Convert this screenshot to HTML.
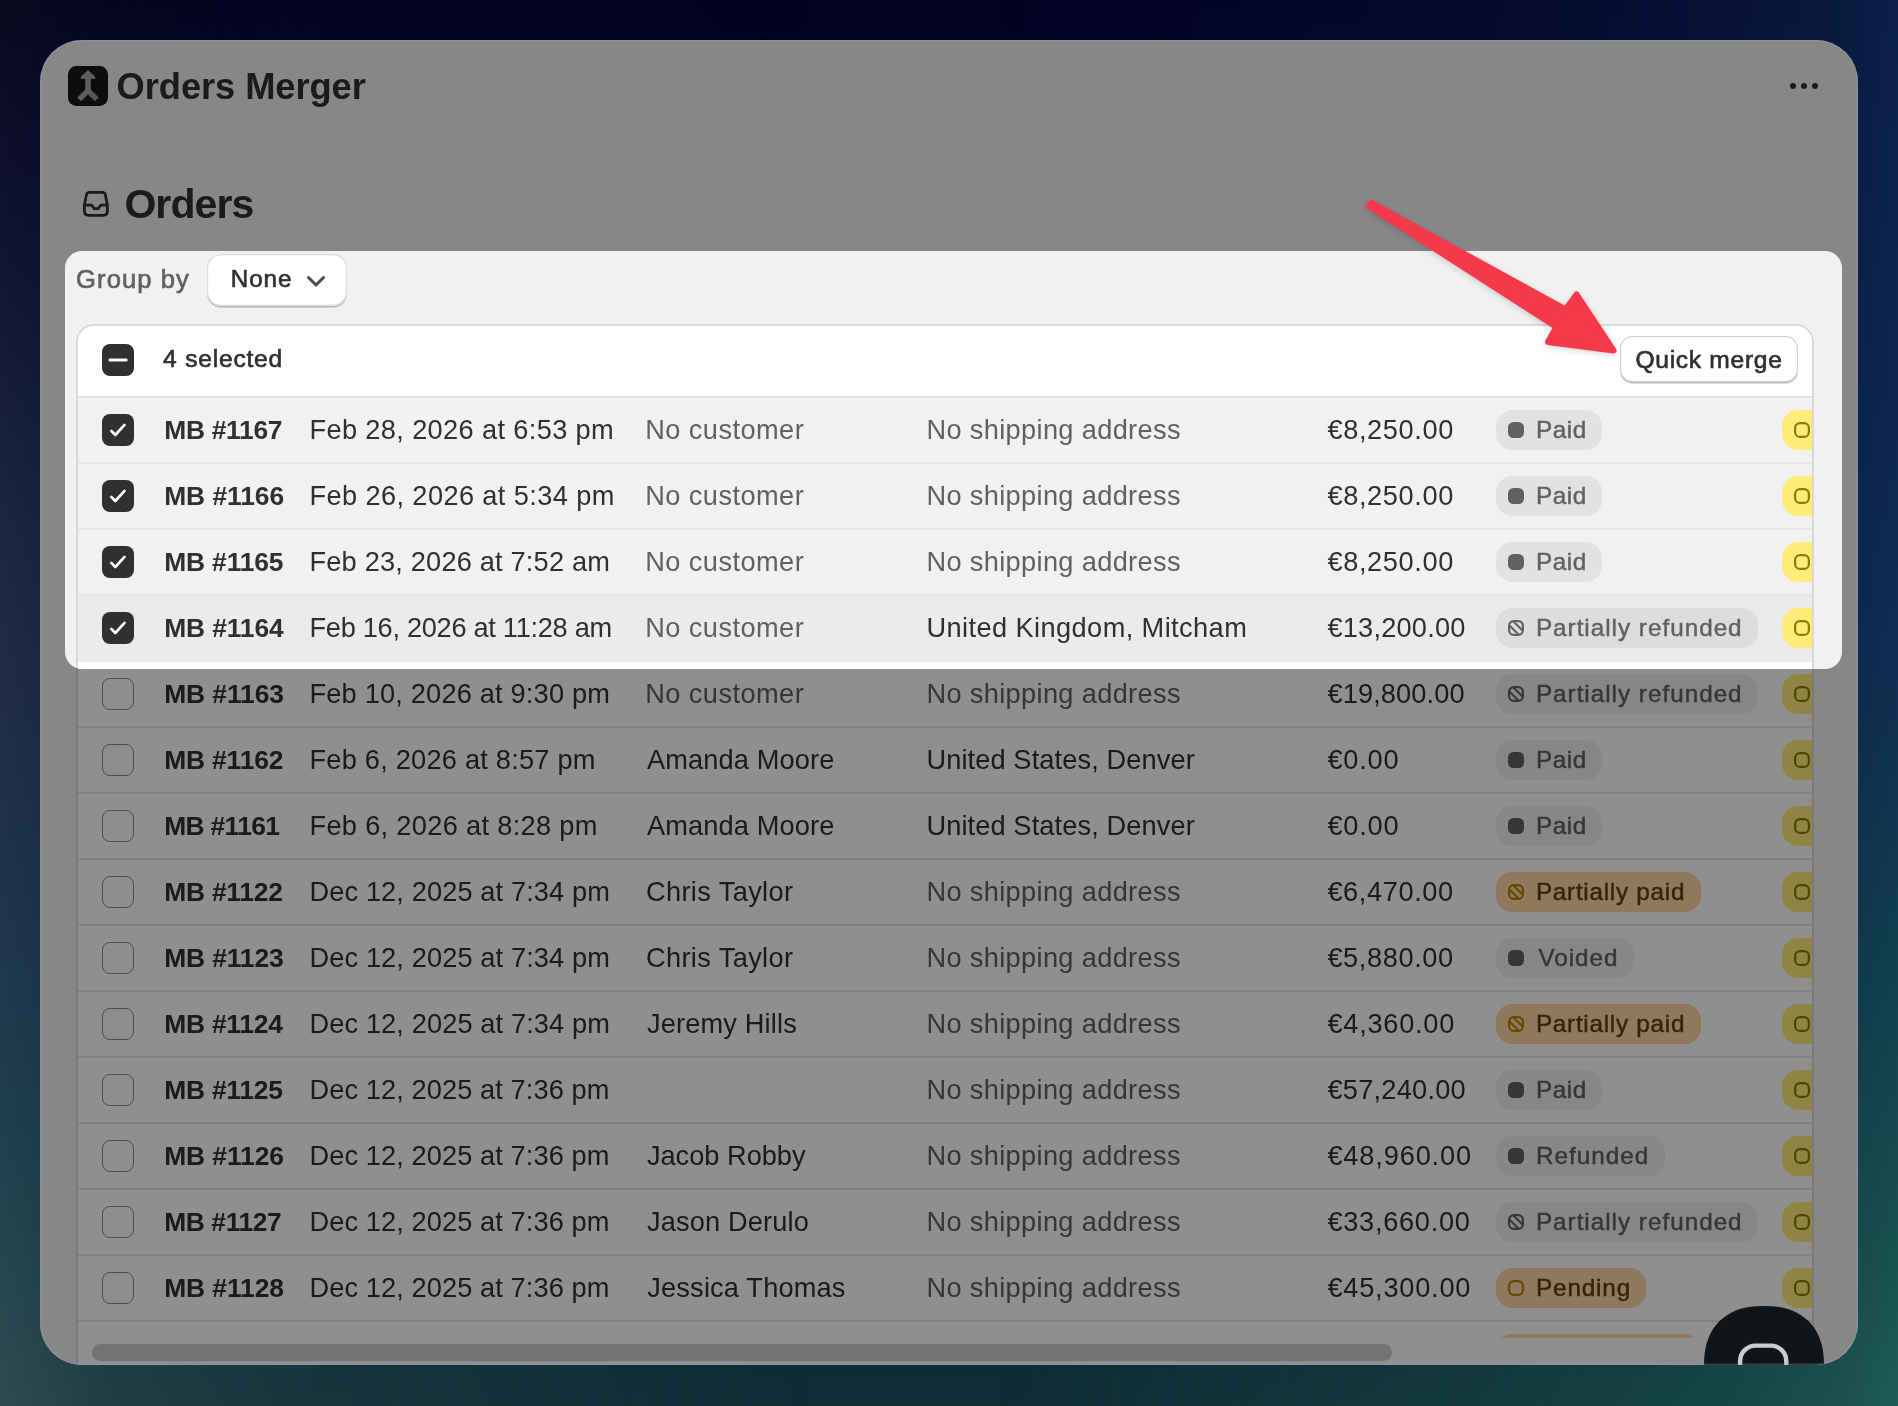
<!DOCTYPE html>
<html lang="en">
<head>
<meta charset="utf-8">
<title>Orders Merger</title>
<style>
*{box-sizing:border-box;margin:0;padding:0}
html,body{width:1898px;height:1406px;overflow:hidden}
body{position:relative;font-family:"Liberation Sans",sans-serif;color:#303030;background:linear-gradient(180deg,#030224 0%,#06112f 40%,#0b2434 75%,#0e2e36 100%)}
#bgL,#bgR{position:absolute;top:0;width:900px;height:1406px}
#bgL{left:0;background:linear-gradient(180deg,#09091f 0%,#101535 18%,#1c2744 38%,#202c48 48%,#1f344e 62%,#1f404f 80%,#274850 92%,#2e4c52 100%);-webkit-mask-image:linear-gradient(90deg,#000 0%,rgba(0,0,0,.85) 4%,rgba(0,0,0,.55) 12%,rgba(0,0,0,.25) 35%,transparent 90%);mask-image:linear-gradient(90deg,#000 0%,rgba(0,0,0,.85) 4%,rgba(0,0,0,.55) 12%,rgba(0,0,0,.25) 35%,transparent 90%)}
#bgR{right:0;background:linear-gradient(180deg,#0b2148 0%,#0d2850 30%,#0f3052 50%,#124050 70%,#18504f 88%,#205c56 100%);-webkit-mask-image:linear-gradient(270deg,#000 0%,rgba(0,0,0,.78) 6%,rgba(0,0,0,.5) 20%,rgba(0,0,0,.25) 48%,transparent 100%);mask-image:linear-gradient(270deg,#000 0%,rgba(0,0,0,.78) 6%,rgba(0,0,0,.5) 20%,rgba(0,0,0,.25) 48%,transparent 100%)}
#win{position:absolute;left:40px;top:40px;width:1818px;height:1325px;border-radius:42px;overflow:hidden;background:#f1f1f1}
#win::after{content:"";position:absolute;left:0;top:0;right:0;bottom:0;border-radius:42px;box-shadow:inset 0 0 0 1.500px rgba(150,162,195,.3);pointer-events:none}
#pg{position:absolute;left:-40px;top:-40px;width:1898px;height:1406px;will-change:transform}
.abs{position:absolute;white-space:nowrap}
.med{-webkit-text-stroke:.65px currentColor}
#appicon{left:68px;top:66px;width:40px;height:40px;border-radius:8.500px;background:#1a1818}
#apptitle{color:#303030}
#dots{left:1789px;top:82px;width:30px;height:8px}
#ordicon{left:80px;top:188px;width:32px;height:32px}
#h1{color:#303030}
#groupby{color:#616161}
#select{left:207px;top:253.700px;width:139.500px;height:52px;border-radius:14px;background:#fff;box-shadow:0 0 0 1.200px #dcdcdc inset,0 1.500px 0 0 #b8b8b8}
#chev{left:305px;top:273px;width:22px;height:16px}
#none{color:#303030}
#card{left:76px;top:324px;width:1738px;height:1100px;background:#fff;border-radius:18px 18px 0 0;border:2px solid #d9d9d9;border-bottom:none;overflow:hidden}
#cardin{position:absolute;left:-78px;top:-326px;width:1898px;height:1406px}
#rowsclip{left:77px;top:397px;width:1736px;height:941px;overflow:hidden}
#rowsin{position:absolute;left:-77px;top:-397px;width:1898px;height:1406px}
#hdr{left:77px;top:325px;width:1736px;height:73px;background:#fff;border-bottom:2px solid #e3e3e3}
.cb{position:absolute;left:102px;width:32px;height:32px;border-radius:8px;border:1.500px solid #8a8a8a;background:#fdfdfd}
.cb.on{background:#303030;border:none}
.cb svg{position:absolute;left:0;top:0;width:32px;height:32px}
#selcount{color:#303030}
#qmbox{left:1619.500px;top:336.300px;width:178px;height:46px;border-radius:12.500px;background:#fff;box-shadow:0 0 0 1.200px #d2d2d2 inset,0 1.500px 0 0 #b8b8b8}
#qm{color:#303030}
.row{position:absolute;left:77px;width:1736px;height:66px;border-bottom:2px solid #e6e6e6;background:#fff;font-size:27.2px;line-height:32px;white-space:nowrap}
.row.sel{background:#f1f1f1}
.row.hov{background:#ebebeb;border-bottom-color:#ebebeb}
.row .cb{left:25px;top:16.200px}
.row .c{position:absolute;top:16.300px;color:#616161}
.row .c.dk{color:#303030}
.row .name{font-weight:bold;color:#303030;font-size:26.400px;top:16.300px}
.row .date{color:#303030}
.row .price{color:#303030}
.badge{position:absolute;left:1419px;top:12.200px;height:40px;border-radius:16px;font-size:24.3px;line-height:32px}
.badge.gr{background:rgba(0,0,0,.06);color:#616161}
.badge.or{background:#ffd6a4;color:#5e4200}
.badge.or .bi{color:#b28400}
.bi{position:absolute;left:10px;top:10px;width:20px;height:20px}
.bt{position:absolute;top:3.88px;-webkit-text-stroke:.45px currentColor}
.yb{position:absolute;left:1705px;top:12.200px;width:60px;height:40px;border-radius:16px;background:#ffeb78;color:#8a7c00}
#scroll{left:92px;top:1344px;width:1300px;height:17px;border-radius:8.500px;background:#cdcdcd}
#chat{left:1704px;top:1306px;width:120px;height:120px}
#dim{left:64.700px;top:250.500px;width:1777.200px;height:418.300px;border-radius:17px;box-shadow:0 0 0 3000px rgba(0,0,0,.44)}
#arrow{left:0;top:0;width:1898px;height:1406px;overflow:visible;filter:drop-shadow(0 2px 3px rgba(0,0,0,.16))}
#apptitle{left:116.6px;top:64.8px;font-size:36.3px;line-height:44px;letter-spacing:-0.08px;font-weight:bold}
#h1{left:124.4px;top:180.2px;font-size:41px;line-height:48px;letter-spacing:-0.91px;font-weight:bold}
#groupby{left:76.1px;top:263.3px;font-size:25.6px;line-height:32px;letter-spacing:1.06px;font-weight:normal}
#none{left:230.7px;top:263.4px;font-size:24.2px;line-height:32px;letter-spacing:0.98px;font-weight:normal}
#selcount{left:163.1px;top:343.4px;font-size:24.6px;line-height:32px;letter-spacing:0.78px;font-weight:normal}
#qm{left:1635.5px;top:343.7px;font-size:24.6px;line-height:32px;letter-spacing:0.69px;font-weight:normal}
</style>
</head>
<body>
<div id="bgL"></div><div id="bgR"></div>
<div id="win"><div id="pg">
 <div class="abs" id="appicon"><svg viewBox="0 0 40 40" width="40" height="40"><path d="M20 24.600 L28.800 33.400" stroke="#999" stroke-width="5.500" fill="none"/><path d="M20 24.600 L11.200 33.400" stroke="#a8a8a8" stroke-width="5.500" fill="none"/><path d="M20 9 V26.500" stroke="#a8a8a8" stroke-width="5.500" fill="none"/><path d="M20 4.600 L27 11.300 V12.300 H13 V11.300 Z" fill="#a8a8a8" stroke="#a8a8a8" stroke-width="1" stroke-linejoin="round"/></svg></div>
 <div class="abs" id="apptitle">Orders Merger</div>
 <svg class="abs" id="dots" viewBox="0 0 30 8"><circle cx="4" cy="4" r="3" fill="#303030"/><circle cx="15" cy="4" r="3" fill="#303030"/><circle cx="26" cy="4" r="3" fill="#303030"/></svg>
 <svg class="abs" id="ordicon" viewBox="0 0 32 32"><path d="M9.600 4.400 H22.200 Q24.900 4.400 25.400 7 L27.350 17 V23.300 Q27.350 27.350 23.300 27.350 H8.450 Q4.400 27.350 4.400 23.300 V17 L6.400 7 Q6.900 4.400 9.600 4.400 Z M4.400 17.200 H11.600 L14.300 20.700 H18.100 L20.800 17.200 H27.350" fill="none" stroke="#303030" stroke-width="2.800" stroke-linejoin="round"/></svg>
 <div class="abs" id="h1">Orders</div>
 <div class="abs med" id="groupby">Group by</div>
 <div class="abs" id="select"></div>
 <div class="abs med" id="none">None</div>
 <svg class="abs" id="chev" viewBox="0 0 22 16"><path d="M3.500 4.500 L11 12 L18.500 4.500" fill="none" stroke="#4a4a4a" stroke-width="3" stroke-linecap="round" stroke-linejoin="round"/></svg>
 <div class="abs" id="card"><div id="cardin">
  <div class="abs" id="hdr"></div>
  <span class="cb on" style="top:344px"><svg viewBox="0 0 32 32"><path d="M8 16 H24.200" stroke="#fff" stroke-width="3" stroke-linecap="round"/></svg></span>
  <div class="abs med" id="selcount">4 selected</div>
  <div class="abs" id="qmbox"></div>
  <div class="abs med" id="qm">Quick merge</div>
<div class="abs" id="rowsclip"><div id="rowsin">
<div class="row sel" style="top:397.8px"><span class="cb on"><svg viewBox="0 0 32 32"><path d="M9.400 17 L13.300 21 L22.500 10.900" fill="none" stroke="#fff" stroke-width="2.700" stroke-linecap="round" stroke-linejoin="round"/></svg></span><span class="c name" style="left:87.2px;letter-spacing:-0.28px">MB #1167</span><span class="c date" style="left:232.5px;letter-spacing:0.36px">Feb 28, 2026 at 6:53 pm</span><span class="c cust" style="left:568.2px;letter-spacing:0.44px">No customer</span><span class="c addr" style="left:849.5px;letter-spacing:0.34px">No shipping address</span><span class="c price" style="left:1250.4px;letter-spacing:0.63px">€8,250.00</span><span class="badge gr" style="width:106.4px"><svg class="bi" viewBox="0 0 20 20"><rect x="2" y="2" width="16" height="16" rx="5.5" fill="currentColor"/></svg><span class="bt" style="left:39.9px;letter-spacing:0.56px">Paid</span></span><span class="yb"><svg class="bi" viewBox="0 0 20 20"><rect x="3.1" y="3.1" width="13.800" height="13.800" rx="5" fill="none" stroke="currentColor" stroke-width="2.200"/></svg></span></div>
<div class="row sel" style="top:463.8px"><span class="cb on"><svg viewBox="0 0 32 32"><path d="M9.400 17 L13.300 21 L22.500 10.900" fill="none" stroke="#fff" stroke-width="2.700" stroke-linecap="round" stroke-linejoin="round"/></svg></span><span class="c name" style="left:87.2px;letter-spacing:-0.05px">MB #1166</span><span class="c date" style="left:232.5px;letter-spacing:0.39px">Feb 26, 2026 at 5:34 pm</span><span class="c cust" style="left:568.2px;letter-spacing:0.44px">No customer</span><span class="c addr" style="left:849.5px;letter-spacing:0.34px">No shipping address</span><span class="c price" style="left:1250.4px;letter-spacing:0.63px">€8,250.00</span><span class="badge gr" style="width:106.4px"><svg class="bi" viewBox="0 0 20 20"><rect x="2" y="2" width="16" height="16" rx="5.5" fill="currentColor"/></svg><span class="bt" style="left:39.9px;letter-spacing:0.56px">Paid</span></span><span class="yb"><svg class="bi" viewBox="0 0 20 20"><rect x="3.1" y="3.1" width="13.800" height="13.800" rx="5" fill="none" stroke="currentColor" stroke-width="2.200"/></svg></span></div>
<div class="row sel" style="top:529.8px"><span class="cb on"><svg viewBox="0 0 32 32"><path d="M9.400 17 L13.300 21 L22.500 10.900" fill="none" stroke="#fff" stroke-width="2.700" stroke-linecap="round" stroke-linejoin="round"/></svg></span><span class="c name" style="left:87.2px;letter-spacing:-0.15px">MB #1165</span><span class="c date" style="left:232.5px;letter-spacing:0.19px">Feb 23, 2026 at 7:52 am</span><span class="c cust" style="left:568.2px;letter-spacing:0.44px">No customer</span><span class="c addr" style="left:849.5px;letter-spacing:0.34px">No shipping address</span><span class="c price" style="left:1250.4px;letter-spacing:0.63px">€8,250.00</span><span class="badge gr" style="width:106.4px"><svg class="bi" viewBox="0 0 20 20"><rect x="2" y="2" width="16" height="16" rx="5.5" fill="currentColor"/></svg><span class="bt" style="left:39.9px;letter-spacing:0.56px">Paid</span></span><span class="yb"><svg class="bi" viewBox="0 0 20 20"><rect x="3.1" y="3.1" width="13.800" height="13.800" rx="5" fill="none" stroke="currentColor" stroke-width="2.200"/></svg></span></div>
<div class="row sel hov" style="top:595.8px"><span class="cb on"><svg viewBox="0 0 32 32"><path d="M9.400 17 L13.300 21 L22.500 10.900" fill="none" stroke="#fff" stroke-width="2.700" stroke-linecap="round" stroke-linejoin="round"/></svg></span><span class="c name" style="left:87.2px;letter-spacing:-0.12px">MB #1164</span><span class="c date" style="left:232.5px;letter-spacing:-0.29px">Feb 16, 2026 at 11:28 am</span><span class="c cust" style="left:568.2px;letter-spacing:0.44px">No customer</span><span class="c addr dk" style="left:849.5px;letter-spacing:0.41px">United Kingdom, Mitcham</span><span class="c price" style="left:1250.4px;letter-spacing:0.22px">€13,200.00</span><span class="badge gr" style="width:261.9px"><svg class="bi" viewBox="0 0 20 20"><rect x="3.1" y="3.1" width="13.800" height="13.800" rx="4.600" fill="none" stroke="currentColor" stroke-width="2.200"/><path d="M3.500 7.500 L12.500 16.500 M7.500 3.500 L16.500 12.500" stroke="currentColor" stroke-width="2" fill="none"/></svg><span class="bt" style="left:39.9px;letter-spacing:0.98px">Partially refunded</span></span><span class="yb"><svg class="bi" viewBox="0 0 20 20"><rect x="3.1" y="3.1" width="13.800" height="13.800" rx="5" fill="none" stroke="currentColor" stroke-width="2.200"/></svg></span></div>
<div class="row" style="top:661.8px"><span class="cb"></span><span class="c name" style="left:87.2px;letter-spacing:-0.08px">MB #1163</span><span class="c date" style="left:232.5px;letter-spacing:0.19px">Feb 10, 2026 at 9:30 pm</span><span class="c cust" style="left:568.2px;letter-spacing:0.44px">No customer</span><span class="c addr" style="left:849.5px;letter-spacing:0.34px">No shipping address</span><span class="c price" style="left:1250.4px;letter-spacing:0.13px">€19,800.00</span><span class="badge gr" style="width:261.9px"><svg class="bi" viewBox="0 0 20 20"><rect x="3.1" y="3.1" width="13.800" height="13.800" rx="4.600" fill="none" stroke="currentColor" stroke-width="2.200"/><path d="M3.500 7.500 L12.500 16.500 M7.500 3.500 L16.500 12.500" stroke="currentColor" stroke-width="2" fill="none"/></svg><span class="bt" style="left:39.9px;letter-spacing:0.98px">Partially refunded</span></span><span class="yb"><svg class="bi" viewBox="0 0 20 20"><rect x="3.1" y="3.1" width="13.800" height="13.800" rx="5" fill="none" stroke="currentColor" stroke-width="2.200"/></svg></span></div>
<div class="row" style="top:727.8px"><span class="cb"></span><span class="c name" style="left:87.2px;letter-spacing:-0.16px">MB #1162</span><span class="c date" style="left:232.5px;letter-spacing:0.23px">Feb 6, 2026 at 8:57 pm</span><span class="c cust dk" style="left:569.9px;letter-spacing:0.15px">Amanda Moore</span><span class="c addr dk" style="left:849.4px;letter-spacing:0.12px">United States, Denver</span><span class="c price" style="left:1250.4px;letter-spacing:0.80px">€0.00</span><span class="badge gr" style="width:106.4px"><svg class="bi" viewBox="0 0 20 20"><rect x="2" y="2" width="16" height="16" rx="5.5" fill="currentColor"/></svg><span class="bt" style="left:39.9px;letter-spacing:0.56px">Paid</span></span><span class="yb"><svg class="bi" viewBox="0 0 20 20"><rect x="3.1" y="3.1" width="13.800" height="13.800" rx="5" fill="none" stroke="currentColor" stroke-width="2.200"/></svg></span></div>
<div class="row" style="top:793.8px"><span class="cb"></span><span class="c name" style="left:87.2px;letter-spacing:-0.66px">MB #1161</span><span class="c date" style="left:232.5px;letter-spacing:0.32px">Feb 6, 2026 at 8:28 pm</span><span class="c cust dk" style="left:569.9px;letter-spacing:0.15px">Amanda Moore</span><span class="c addr dk" style="left:849.4px;letter-spacing:0.12px">United States, Denver</span><span class="c price" style="left:1250.4px;letter-spacing:0.80px">€0.00</span><span class="badge gr" style="width:106.4px"><svg class="bi" viewBox="0 0 20 20"><rect x="2" y="2" width="16" height="16" rx="5.5" fill="currentColor"/></svg><span class="bt" style="left:39.9px;letter-spacing:0.56px">Paid</span></span><span class="yb"><svg class="bi" viewBox="0 0 20 20"><rect x="3.1" y="3.1" width="13.800" height="13.800" rx="5" fill="none" stroke="currentColor" stroke-width="2.200"/></svg></span></div>
<div class="row" style="top:859.8px"><span class="cb"></span><span class="c name" style="left:87.2px;letter-spacing:-0.22px">MB #1122</span><span class="c date" style="left:232.5px;letter-spacing:0.12px">Dec 12, 2025 at 7:34 pm</span><span class="c cust dk" style="left:568.9px;letter-spacing:0.38px">Chris Taylor</span><span class="c addr" style="left:849.5px;letter-spacing:0.34px">No shipping address</span><span class="c price" style="left:1250.4px;letter-spacing:0.61px">€6,470.00</span><span class="badge or" style="width:204.7px"><svg class="bi" viewBox="0 0 20 20"><rect x="3.1" y="3.1" width="13.800" height="13.800" rx="4.600" fill="none" stroke="currentColor" stroke-width="2.200"/><path d="M3.500 7.500 L12.500 16.500 M7.500 3.500 L16.500 12.500" stroke="currentColor" stroke-width="2" fill="none"/></svg><span class="bt" style="left:39.9px;letter-spacing:0.73px">Partially paid</span></span><span class="yb"><svg class="bi" viewBox="0 0 20 20"><rect x="3.1" y="3.1" width="13.800" height="13.800" rx="5" fill="none" stroke="currentColor" stroke-width="2.200"/></svg></span></div>
<div class="row" style="top:925.8px"><span class="cb"></span><span class="c name" style="left:87.2px;letter-spacing:-0.12px">MB #1123</span><span class="c date" style="left:232.5px;letter-spacing:0.12px">Dec 12, 2025 at 7:34 pm</span><span class="c cust dk" style="left:568.9px;letter-spacing:0.38px">Chris Taylor</span><span class="c addr" style="left:849.5px;letter-spacing:0.34px">No shipping address</span><span class="c price" style="left:1250.4px;letter-spacing:0.61px">€5,880.00</span><span class="badge gr" style="width:137.6px"><svg class="bi" viewBox="0 0 20 20"><rect x="2" y="2" width="16" height="16" rx="5.5" fill="currentColor"/></svg><span class="bt" style="left:42.5px;letter-spacing:0.92px">Voided</span></span><span class="yb"><svg class="bi" viewBox="0 0 20 20"><rect x="3.1" y="3.1" width="13.800" height="13.800" rx="5" fill="none" stroke="currentColor" stroke-width="2.200"/></svg></span></div>
<div class="row" style="top:991.8px"><span class="cb"></span><span class="c name" style="left:87.2px;letter-spacing:-0.22px">MB #1124</span><span class="c date" style="left:232.5px;letter-spacing:0.12px">Dec 12, 2025 at 7:34 pm</span><span class="c cust dk" style="left:569.9px;letter-spacing:0.17px">Jeremy Hills</span><span class="c addr" style="left:849.5px;letter-spacing:0.34px">No shipping address</span><span class="c price" style="left:1250.4px;letter-spacing:0.75px">€4,360.00</span><span class="badge or" style="width:204.7px"><svg class="bi" viewBox="0 0 20 20"><rect x="3.1" y="3.1" width="13.800" height="13.800" rx="4.600" fill="none" stroke="currentColor" stroke-width="2.200"/><path d="M3.500 7.500 L12.500 16.500 M7.500 3.500 L16.500 12.500" stroke="currentColor" stroke-width="2" fill="none"/></svg><span class="bt" style="left:39.9px;letter-spacing:0.73px">Partially paid</span></span><span class="yb"><svg class="bi" viewBox="0 0 20 20"><rect x="3.1" y="3.1" width="13.800" height="13.800" rx="5" fill="none" stroke="currentColor" stroke-width="2.200"/></svg></span></div>
<div class="row" style="top:1057.8px"><span class="cb"></span><span class="c name" style="left:87.2px;letter-spacing:-0.22px">MB #1125</span><span class="c date" style="left:232.5px;letter-spacing:0.10px">Dec 12, 2025 at 7:36 pm</span><span class="c addr" style="left:849.5px;letter-spacing:0.34px">No shipping address</span><span class="c price" style="left:1250.4px;letter-spacing:0.25px">€57,240.00</span><span class="badge gr" style="width:106.4px"><svg class="bi" viewBox="0 0 20 20"><rect x="2" y="2" width="16" height="16" rx="5.5" fill="currentColor"/></svg><span class="bt" style="left:39.9px;letter-spacing:0.56px">Paid</span></span><span class="yb"><svg class="bi" viewBox="0 0 20 20"><rect x="3.1" y="3.1" width="13.800" height="13.800" rx="5" fill="none" stroke="currentColor" stroke-width="2.200"/></svg></span></div>
<div class="row" style="top:1123.8px"><span class="cb"></span><span class="c name" style="left:87.2px;letter-spacing:-0.08px">MB #1126</span><span class="c date" style="left:232.5px;letter-spacing:0.10px">Dec 12, 2025 at 7:36 pm</span><span class="c cust dk" style="left:569.9px;letter-spacing:0.00px">Jacob Robby</span><span class="c addr" style="left:849.5px;letter-spacing:0.34px">No shipping address</span><span class="c price" style="left:1250.4px;letter-spacing:0.85px">€48,960.00</span><span class="badge gr" style="width:168.5px"><svg class="bi" viewBox="0 0 20 20"><rect x="2" y="2" width="16" height="16" rx="5.5" fill="currentColor"/></svg><span class="bt" style="left:40.0px;letter-spacing:0.99px">Refunded</span></span><span class="yb"><svg class="bi" viewBox="0 0 20 20"><rect x="3.1" y="3.1" width="13.800" height="13.800" rx="5" fill="none" stroke="currentColor" stroke-width="2.200"/></svg></span></div>
<div class="row" style="top:1189.8px"><span class="cb"></span><span class="c name" style="left:87.2px;letter-spacing:-0.40px">MB #1127</span><span class="c date" style="left:232.5px;letter-spacing:0.10px">Dec 12, 2025 at 7:36 pm</span><span class="c cust dk" style="left:569.9px;letter-spacing:0.16px">Jason Derulo</span><span class="c addr" style="left:849.5px;letter-spacing:0.34px">No shipping address</span><span class="c price" style="left:1250.4px;letter-spacing:0.72px">€33,660.00</span><span class="badge gr" style="width:261.9px"><svg class="bi" viewBox="0 0 20 20"><rect x="3.1" y="3.1" width="13.800" height="13.800" rx="4.600" fill="none" stroke="currentColor" stroke-width="2.200"/><path d="M3.500 7.500 L12.500 16.500 M7.500 3.500 L16.500 12.500" stroke="currentColor" stroke-width="2" fill="none"/></svg><span class="bt" style="left:39.9px;letter-spacing:0.98px">Partially refunded</span></span><span class="yb"><svg class="bi" viewBox="0 0 20 20"><rect x="3.1" y="3.1" width="13.800" height="13.800" rx="5" fill="none" stroke="currentColor" stroke-width="2.200"/></svg></span></div>
<div class="row" style="top:1255.8px"><span class="cb"></span><span class="c name" style="left:87.2px;letter-spacing:-0.08px">MB #1128</span><span class="c date" style="left:232.5px;letter-spacing:0.10px">Dec 12, 2025 at 7:36 pm</span><span class="c cust dk" style="left:570.3px;letter-spacing:0.17px">Jessica Thomas</span><span class="c addr" style="left:849.5px;letter-spacing:0.34px">No shipping address</span><span class="c price" style="left:1250.4px;letter-spacing:0.77px">€45,300.00</span><span class="badge or" style="width:150.4px"><svg class="bi" viewBox="0 0 20 20"><rect x="3.1" y="3.1" width="13.800" height="13.800" rx="5" fill="none" stroke="currentColor" stroke-width="2.200"/></svg><span class="bt" style="left:40.0px;letter-spacing:0.84px">Pending</span></span><span class="yb"><svg class="bi" viewBox="0 0 20 20"><rect x="3.1" y="3.1" width="13.800" height="13.800" rx="5" fill="none" stroke="currentColor" stroke-width="2.200"/></svg></span></div>
<div class="row" style="top:1321.8px"><span class="cb"></span><span class="badge or" style="width:204px"></span><span class="yb"></span></div>
</div></div>
 </div></div>
 <div class="abs" id="scroll"></div>
 <div class="abs" id="dim"></div>
 <svg class="abs" id="chat" viewBox="0 0 120 120"><path d="M120.0 60.0 L119.8 67.5 L119.2 73.5 L118.3 79.0 L116.9 84.1 L115.2 88.8 L113.1 93.3 L110.6 97.4 L107.8 101.2 L104.7 104.7 L101.2 107.8 L97.4 110.6 L93.3 113.1 L88.8 115.2 L84.1 116.9 L79.0 118.3 L73.5 119.2 L67.5 119.8 L60.0 120.0 L52.5 119.8 L46.5 119.2 L41.0 118.3 L35.9 116.9 L31.2 115.2 L26.7 113.1 L22.6 110.6 L18.8 107.8 L15.3 104.7 L12.2 101.2 L9.4 97.4 L6.9 93.3 L4.8 88.8 L3.1 84.1 L1.7 79.0 L0.8 73.5 L0.2 67.5 L0.0 60.0 L0.2 52.5 L0.8 46.5 L1.7 41.0 L3.1 35.9 L4.8 31.2 L6.9 26.7 L9.4 22.6 L12.2 18.8 L15.3 15.3 L18.8 12.2 L22.6 9.4 L26.7 6.9 L31.2 4.8 L35.9 3.1 L41.0 1.7 L46.5 0.8 L52.5 0.2 L60.0 0.0 L67.5 0.2 L73.5 0.8 L79.0 1.7 L84.1 3.1 L88.8 4.8 L93.3 6.9 L97.4 9.4 L101.2 12.2 L104.7 15.3 L107.8 18.8 L110.6 22.6 L113.1 26.7 L115.2 31.2 L116.9 35.9 L118.3 41.0 L119.2 46.5 L119.8 52.5 Z" fill="#111518"/><rect x="36.100" y="39.600" width="46.200" height="46" rx="15.500" fill="none" stroke="#c9cdcd" stroke-width="4.400"/></svg>
 <svg class="abs" id="arrow" viewBox="0 0 1898 1406"><path d="M1371.500 202.800 L1565.500 309.500 L1576.500 294.500 L1613.500 350.500 L1548 342 L1556.500 327 L1368.500 206 Z" fill="#f5384a" stroke="#f5384a" stroke-width="6" stroke-linejoin="round"/></svg>
</div></div>
</body>
</html>
